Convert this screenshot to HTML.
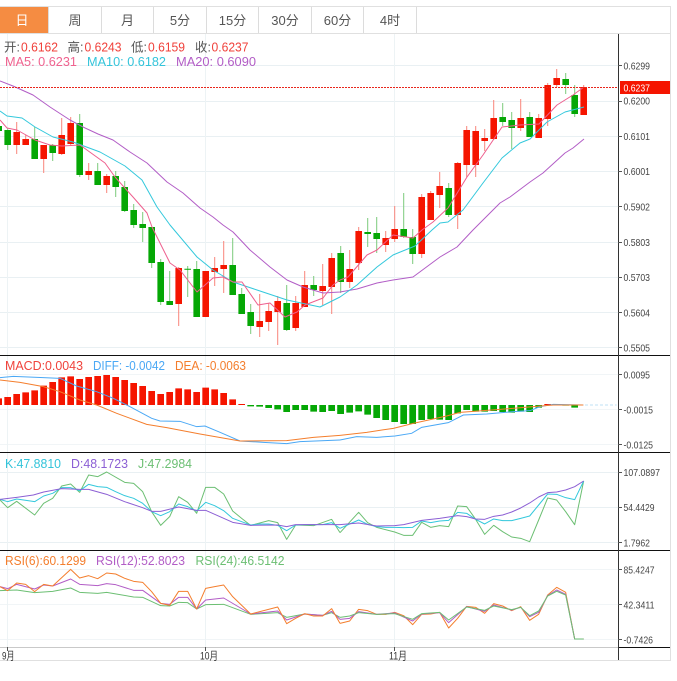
<!DOCTYPE html>
<html lang="zh"><head><meta charset="utf-8"><title>K线图</title>
<style>
html,body{margin:0;padding:0;background:#fff;width:677px;height:681px;overflow:hidden}
svg{display:block;font-family:"Liberation Sans","Noto Sans CJK SC",sans-serif}
</style></head><body>
<svg width="677" height="681" viewBox="0 0 677 681" xmlns="http://www.w3.org/2000/svg">
<!-- frame + tabs -->
<rect x="0" y="7" width="48" height="26" fill="#f58c42"/>
<path d="M0 6.5H671M0 33.5H671M670.5 6V661M0 660.5H671" fill="none" stroke="#e0e0e0"/>
<path d="M48.5 7V33M101.5 7V33M153.5 7V33M206.5 7V33M258.5 7V33M311.5 7V33M363.5 7V33M416.5 7V33" stroke="#dcdcdc"/>
<g font-size="13" text-anchor="middle" fill="#555">
<text x="22" y="25" fill="#fff">日</text><text x="75" y="25">周</text><text x="127.5" y="25">月</text><text x="180" y="25">5分</text><text x="232.5" y="25">15分</text><text x="285" y="25">30分</text><text x="337.5" y="25">60分</text><text x="390" y="25">4时</text>
</g>
<!-- grid -->
<path d="M0 65.5H618M0 101.5H618M0 136.5H618M0 171.5H618M0 206.5H618M0 242.5H618M0 277.5H618M0 312.5H618M0 347.5H618M0 472.5H618M0 507.5H618M0 542.5H618" stroke="#e9f0f3"/>
<path d="M0 374.5H618M0 409.5H618M0 444.5H618M0 569.5H618M0 604.5H618M0 639.5H618" stroke="#f1f5f7"/>
<path d="M7.5 34V647M205.5 34V647M394.5 34V647" stroke="#edf3f5"/>
<!-- candle wicks -->
<path fill="none" stroke="#7ccb7c" stroke-width="1" d="M7.7 128V150M34.7 127V159M52.7 144V161M79.7 114V177M97.7 163V185M115.7 171V197M124.7 181V212M133.7 204V228M142.7 212V242M151.7 227V268M160.7 259V305M169.7 271V305M187.7 266V297M196.7 261V317M232.7 238V295M241.7 288V314M250.7 304V334M286.7 285V331M313.7 276V296M340.7 246V293M367.7 218V247M376.7 217V253M403.7 193V238M412.7 229V264M448.7 183V217M502.7 103V126M511.7 112V149M529.7 112V137M565.7 73V94M574.7 85V117"/>
<path fill="none" stroke="#f9857b" stroke-width="1" d="M16.7 122V154M25.7 135V145M43.7 145V173M61.7 118V155M70.7 117V145M88.7 163V180M106.7 174V193M178.7 267V326M205.7 271V317M214.7 257V286M223.7 241V293M259.7 294V337M268.7 303V331M277.7 296V345M295.7 296V331M304.7 271V307M322.7 264V305M331.7 253V314M349.7 250V288M358.7 227V270M385.7 231V252M394.7 206V242M421.7 194V258M430.7 191V220M439.7 172V208M457.7 162V229M466.7 126V177M475.7 126V177M484.7 129V151M493.7 100V140M520.7 99V131M538.7 114V138M547.7 83V126M556.7 69V87M583.7 85V115"/>
<!-- candle bodies -->
<path fill="none" stroke="#05a705" stroke-width="6.6" d="M-1.3 126V131M7.7 130V145M34.7 139V159M52.7 145V153M79.7 123V175M97.7 171V185M115.7 176V187M124.7 187V211M133.7 210V225M142.7 224V228M151.7 227V263M160.7 262V302M169.7 301V305M187.7 268.8V269.8M196.7 269V317M232.7 265V295M241.7 294V314M250.7 312V326M286.7 303V330M313.7 285V290M340.7 253V282M367.7 232V234M376.7 233V239M403.7 229V237M412.7 237V254M448.7 188V215M502.7 117V122M511.7 120V128M529.7 117V137M565.7 79V85M574.7 95V114"/>
<path fill="none" stroke="#f51500" stroke-width="6.6" d="M16.7 132V145M25.7 139V145M43.7 145V159M61.7 135V154M70.7 123V144M88.7 171V175M106.7 176V185M178.7 268V304M205.7 271V317M214.7 268V272M223.7 265V269M259.7 321V327M268.7 311V322M277.7 301V312M295.7 303V328M304.7 285V307M322.7 286V291M331.7 258V287M349.7 269V282M358.7 231V263M385.7 238V245M394.7 229V239M421.7 197V254M430.7 193V220M439.7 186V195M457.7 163V215M466.7 130V165M475.7 131V165M484.7 138V141M493.7 118V139M520.7 118V128M538.7 118V138M547.7 85V119M556.7 78V85M583.7 87V115"/>
<!-- MA lines -->
<g fill="none" stroke-width="1" stroke-linejoin="round">
<polyline stroke="#b25dc6" points="0,81 13,86 33,95 50,107 70,120 83,127 98,134 113,140 130,152 147,163 167,182 183,193 200,208 213,217 223,225 233,232 250,250 270,267 287,280 303,287 323,293 340,292 357,289 377,283 393,280 413,277 440,257 457,247 473,230 500,203 510,197 530,182 543,173 565,153 573,148 584,139"/>
<polyline stroke="#33c8dc" points="0,111 7,116 22,118 35,127 53,137 73,142 100,152 125,166 142,180 157,207 170,225 197,257 213,270 233,282 257,290 287,300 320,307 340,297 357,285 377,267 393,255 415,246 432,230 440,223 448,222 463,210 483,183 502,158 520,143 530,139 547,122 565,112 584,107"/>
<polyline stroke="#ee5f8e" points="0,120 7,128 17,130 35,140 50,145 62,146 80,145 105,163 115,177 133,197 147,213 152,227 170,263 180,270 197,292 213,278 223,277 233,282 242,282 258,305 270,303 285,317 297,312 305,305 323,298 333,285 340,280 348,277 367,255 377,250 393,235 413,238 422,230 433,222 448,208 467,177 483,155 502,127 520,125 539,124 557,105 573,95 584,87"/>
</g>
<path d="M0 87.5H618" stroke="#e8261c" stroke-dasharray="2 1" fill="none"/>
<!-- MACD -->
<g transform="translate(0 225) scale(.33333)" fill="none">
<path stroke="#f51500" stroke-width="20" d="M-4 540V520M23 540V516M50 540V507M77 540V502M104 540V496M131 540V482M158 540V471M185 540V457M212 540V454M239 540V462M266 540V456M293 540V453M320 540V450M347 540V456M374 540V465M401 540V474M428 540V483M455 540V498M482 540V507M509 540V501M536 540V490M563 540V493M590 540V501M617 540V488M644 540V493M671 540V504M698 540V523M725 540V537"/>
<path stroke="#05a705" stroke-width="20" d="M752 540V544M779 540V545M806 540V549M833 540V553M860 540V561M887 540V555M914 540V555M941 540V560M968 540V561M995 540V558M1022 540V567"/>
<polyline stroke="#4aa8f5" stroke-width="3" points="0,458 40,454 130,458 180,460 230,483 290,500 340,520 390,545 455,580 480,588 540,589 590,605 615,603 660,622 720,648 790,652 860,656 900,650 1020,645"/>
<polyline stroke="#f47e2d" stroke-width="3" points="0,465 60,472 130,485 180,500 240,525 290,540 350,565 440,598 500,608 600,627 720,648 860,647 940,637 1020,631"/>
</g>
<g transform="translate(340 225) scale(.33333)" fill="none">
<path stroke="#05a705" stroke-width="20" d="M2 540V567M29 540V563M56 540V559M83 540V569M110 540V579M137 540V585M164 540V591M191 540V597M218 540V597M245 540V585M272 540V582M299 540V584M326 540V585M353 540V565M380 540V555M407 540V560M434 540V560M461 540V558M488 540V561M515 540V563M542 540V560M569 540V561M596 540V548M677 540V542M704 540V548"/>
<path stroke="#f51500" stroke-width="20" d="M623 540V537M650 540V537"/>
<polyline stroke="#4aa8f5" stroke-width="3" points="0,645 50,635 110,637 165,633 215,625 245,607 325,593 370,570 440,567 520,560 570,557 600,545 640,538 730,540"/>
<polyline stroke="#f47e2d" stroke-width="3" points="0,631 80,622 160,610 220,595 320,573 360,562 480,553 580,545 640,540 730,540"/>
<path stroke="#bfe0f5" stroke-width="3" stroke-dasharray="9 6" d="M735 540H830"/>
</g>
<!-- KDJ + RSI -->
<g transform="translate(0 450) scale(.33333)" fill="none" stroke-width="3" stroke-linejoin="round">
<polyline stroke="#6cbf73" points="0,150 23,173 50,154 104,195 131,160 158,145 185,108 212,102 239,127 266,75 293,80 320,66 374,97 401,100 428,125 455,185 482,226 509,200 536,140 563,157 590,190 617,112 644,112 671,132 698,183 725,205 752,226 806,212 833,218 860,268 887,225 941,227 995,208 1020,248"/>
<polyline stroke="#33c8dc" points="0,148 23,155 50,147 104,155 131,138 158,130 185,113 212,113 239,122 266,103 293,110 320,112 347,125 374,137 401,145 428,160 455,185 482,197 509,185 536,162 563,170 590,183 617,157 644,167 671,182 698,205 725,215 752,225 779,222 806,222 833,226 860,242 887,225 914,224 941,224 968,224 995,218 1020,235"/>
<polyline stroke="#8c5fd4" points="0,148 50,142 100,135 131,126 185,116 239,118 266,118 320,133 374,155 428,173 455,184 482,184 536,171 590,181 617,181 671,205 698,217 752,226 833,225 860,230 887,224 941,224 1020,224"/>
<polyline stroke="#6cbf73" points="0,422 50,420 104,428 158,424 212,414 239,427 293,430 320,427 401,441 428,442 482,467 509,468 536,457 563,458 590,477 617,464 671,463 752,493 833,488 860,502 914,492 968,496 995,488 1020,502"/>
<polyline stroke="#b25dc6" points="0,410 23,416 50,403 104,417 131,405 158,408 212,387 239,403 293,407 320,401 347,404 401,421 428,421 482,460 509,463 536,442 563,442 590,477 617,450 671,444 752,492 833,483 860,510 914,492 968,496 995,484 1020,508"/>
<polyline stroke="#f47e2d" points="0,410 23,422 50,399 77,403 104,425 131,403 158,408 212,358 239,384 266,377 293,386 320,369 347,372 374,385 401,394 428,397 455,425 482,460 509,466 536,424 563,424 590,477 617,415 644,410 671,405 698,440 752,492 833,471 860,521 887,505 914,491 941,498 968,498 995,476 1020,520"/>
</g>
<g transform="translate(340 450) scale(.33333)" fill="none" stroke-width="3" stroke-linejoin="round">
<polyline stroke="#6cbf73" points="0,248 56,187 83,218 110,232 164,246 191,256 218,256 245,217 272,232 299,227 326,230 353,168 380,170 407,208 434,253 461,226 488,245 515,261 542,265 569,275 596,210 623,144 650,150 677,185 704,224 731,93"/>
<polyline stroke="#33c8dc" points="0,235 29,222 56,210 83,223 110,230 137,232 164,232 191,233 218,232 245,213 272,218 299,213 326,211 353,187 380,190 407,208 434,222 461,207 488,212 515,212 542,205 569,198 596,165 623,132 650,133 677,143 704,149 731,93"/>
<polyline stroke="#8c5fd4" points="0,224 56,219 110,228 164,227 191,224 245,211 299,205 353,197 380,200 407,207 434,208 461,199 488,195 515,186 542,174 569,159 596,141 623,128 650,126 677,120 704,110 731,93"/>
<polyline stroke="#f47e2d" points="0,520 29,513 56,478 83,482 110,493 137,493 164,487 191,497 218,524 245,493 272,492 299,487 326,534 353,505 380,469 407,472 434,490 461,461 488,468 515,482 542,470 569,511 596,493 623,435 650,412 677,427 704,567 731,567"/>
<polyline stroke="#b25dc6" points="0,508 29,505 56,485 110,493 164,489 218,513 245,492 299,488 326,518 380,470 434,484 461,465 515,480 542,472 569,500 596,487 623,437 650,420 677,433 704,567 731,567"/>
<polyline stroke="#6cbf73" points="0,502 29,498 56,488 110,493 164,491 218,508 245,491 299,487 326,510 380,471 434,481 461,468 515,479 542,472 569,497 596,483 623,438 650,424 677,435 704,567 731,567"/>
</g>
<!-- axes -->
<path d="M0 647.5H618" stroke="#c9c9c9"/>
<path d="M618 647.5H670M0 355.5H670M0 452.5H670M0 550.5H670" stroke="#111"/>
<path d="M618.5 34V660" stroke="#333"/>
<path d="M618 65.5h4M618 101.5h4M618 136.5h4M618 171.5h4M618 206.5h4M618 242.5h4M618 277.5h4M618 312.5h4M618 347.5h4M618 374.5h4M618 409.5h4M618 444.5h4M618 472.5h4M618 507.5h4M618 542.5h4M618 569.5h4M618 604.5h4M618 639.5h4M7.5 647v4M205.5 647v4M394.5 647v4" stroke="#555"/>
<!-- price tag -->
<rect x="620" y="81" width="50" height="13" fill="#f51500"/>
<!-- axis labels -->
<g font-size="10.5" fill="#444">
<text x="623.5" y="69.500" textLength="26.5" lengthAdjust="spacingAndGlyphs">0.6299</text>
<text x="623.5" y="91.500" textLength="26.5" lengthAdjust="spacingAndGlyphs" fill="#fff">0.6237</text>
<text x="623.5" y="104.500" textLength="26.5" lengthAdjust="spacingAndGlyphs">0.6200</text>
<text x="623.5" y="140" textLength="26.5" lengthAdjust="spacingAndGlyphs">0.6101</text>
<text x="623.5" y="175" textLength="26.5" lengthAdjust="spacingAndGlyphs">0.6001</text>
<text x="623.5" y="210.500" textLength="26.5" lengthAdjust="spacingAndGlyphs">0.5902</text>
<text x="623.5" y="246" textLength="26.5" lengthAdjust="spacingAndGlyphs">0.5803</text>
<text x="623.5" y="281" textLength="26.5" lengthAdjust="spacingAndGlyphs">0.5703</text>
<text x="623.5" y="316.500" textLength="26.5" lengthAdjust="spacingAndGlyphs">0.5604</text>
<text x="623.5" y="351.500" textLength="26.5" lengthAdjust="spacingAndGlyphs">0.5505</text>
<text x="623.5" y="378.500" textLength="26.5" lengthAdjust="spacingAndGlyphs">0.0095</text>
<text x="623.5" y="413.500" textLength="29.5" lengthAdjust="spacingAndGlyphs">-0.0015</text>
<text x="623.5" y="448.500" textLength="29.5" lengthAdjust="spacingAndGlyphs">-0.0125</text>
<text x="623.5" y="476" textLength="36.5" lengthAdjust="spacingAndGlyphs">107.0897</text>
<text x="623.5" y="511" textLength="31" lengthAdjust="spacingAndGlyphs">54.4429</text>
<text x="623.5" y="546.500" textLength="26.5" lengthAdjust="spacingAndGlyphs">1.7962</text>
<text x="623.5" y="573.500" textLength="31" lengthAdjust="spacingAndGlyphs">85.4247</text>
<text x="623.5" y="608.500" textLength="31" lengthAdjust="spacingAndGlyphs">42.3411</text>
<text x="623.5" y="643.500" textLength="29.5" lengthAdjust="spacingAndGlyphs">-0.7426</text>
</g>
<!-- legends -->
<g font-size="12.500">
<text x="4" y="51.500" fill="#555">开:</text><text x="21" y="51.500" fill="#f0403a" textLength="37" lengthAdjust="spacingAndGlyphs">0.6162</text>
<text x="67.5" y="51.500" fill="#555">高:</text><text x="84.500" y="51.500" fill="#f0403a" textLength="37" lengthAdjust="spacingAndGlyphs">0.6243</text>
<text x="131" y="51.500" fill="#555">低:</text><text x="148" y="51.500" fill="#f0403a" textLength="37" lengthAdjust="spacingAndGlyphs">0.6159</text>
<text x="195" y="51.500" fill="#555">收:</text><text x="211.500" y="51.500" fill="#f0403a" textLength="37" lengthAdjust="spacingAndGlyphs">0.6237</text>
<text x="5" y="66" fill="#f0628f" textLength="72" lengthAdjust="spacingAndGlyphs">MA5: 0.6231</text>
<text x="87" y="66" fill="#33c4da" textLength="79" lengthAdjust="spacingAndGlyphs">MA10: 0.6182</text>
<text x="176" y="66" fill="#b25dc6" textLength="80" lengthAdjust="spacingAndGlyphs">MA20: 0.6090</text>
<text x="5" y="370" fill="#f0433c" textLength="78" lengthAdjust="spacingAndGlyphs">MACD:0.0043</text>
<text x="93" y="370" fill="#4aa8f5" textLength="72" lengthAdjust="spacingAndGlyphs">DIFF: -0.0042</text>
<text x="175" y="370" fill="#f47e2d" textLength="71" lengthAdjust="spacingAndGlyphs">DEA: -0.0063</text>
<text x="5" y="468" fill="#33c4da" textLength="56" lengthAdjust="spacingAndGlyphs">K:47.8810</text>
<text x="71" y="468" fill="#8c5fd4" textLength="57" lengthAdjust="spacingAndGlyphs">D:48.1723</text>
<text x="138" y="468" fill="#6cbf73" textLength="54" lengthAdjust="spacingAndGlyphs">J:47.2984</text>
<text x="5" y="565" fill="#f47e2d" textLength="81" lengthAdjust="spacingAndGlyphs">RSI(6):60.1299</text>
<text x="96" y="565" fill="#b25dc6" textLength="89" lengthAdjust="spacingAndGlyphs">RSI(12):52.8023</text>
<text x="195.500" y="565" fill="#6cbf73" textLength="89" lengthAdjust="spacingAndGlyphs">RSI(24):46.5142</text>
</g>
<g font-size="11" fill="#333">
<text x="2" y="659.500" textLength="12.5" lengthAdjust="spacingAndGlyphs">9月</text><text x="200" y="659.500" textLength="18" lengthAdjust="spacingAndGlyphs">10月</text><text x="389" y="659.500" textLength="18" lengthAdjust="spacingAndGlyphs">11月</text>
</g>
</svg>
</body></html>
